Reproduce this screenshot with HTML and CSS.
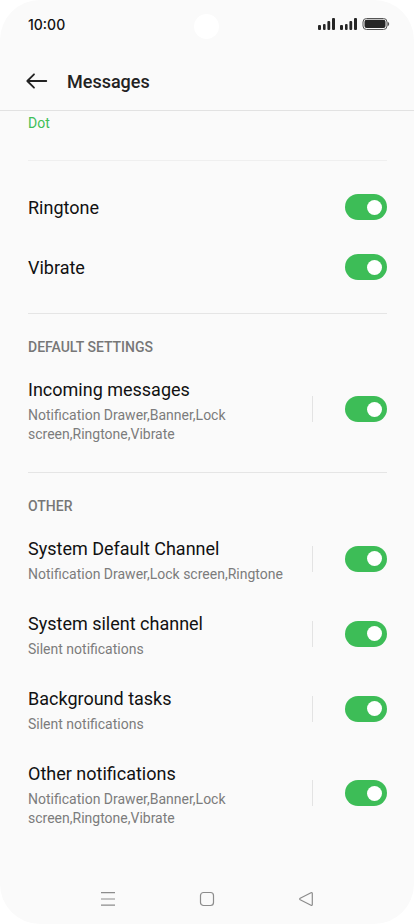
FILE: index.html
```html
<!DOCTYPE html>
<html lang="en">
<head>
<meta charset="utf-8">
<meta name="viewport" content="width=device-width, initial-scale=1">
<title>Messages</title>
<link rel="stylesheet" href="styles.css">
</head>
<body>
<div class="phone">
  <div class="camera"></div>
  <div class="status">
    <time class="clock">10:00</time>
    <svg class="indicators" width="72" height="14" viewBox="0 0 72 14" aria-hidden="true">
      <g fill="#262626">
        <rect x="0" y="8" width="3" height="5" rx="1"/><rect x="5" y="7" width="2.6" height="6" rx="1"/><rect x="9.4" y="4" width="2.8" height="9" rx="1"/><rect x="14" y="1" width="3" height="12" rx="1"/>
        <rect x="22" y="8" width="3" height="5" rx="1"/><rect x="27" y="7" width="2.6" height="6" rx="1"/><rect x="31.4" y="4" width="2.8" height="9" rx="1"/><rect x="36" y="1" width="3" height="12" rx="1"/>
        <rect x="46.5" y="2.800" width="21" height="8.200" rx="2"/>
        <path d="M69.6 5h.4q1.2.6 1.200 2t-1.200 2h-.4z" fill="#555"/>
      </g>
      <rect x="45" y="1.500" width="24" height="11" rx="3.500" fill="none" stroke="#555"/>
    </svg>
  </div>
  <header class="header">
    <button class="back" type="button" aria-label="Back">
      <svg width="22" height="16" viewBox="0 0 22 16" fill="none" stroke="#222" stroke-width="1.8" stroke-linecap="round" stroke-linejoin="round"><path d="M20.300 8H1.500M8 1.300L1.300 8L8 14.700"/></svg>
    </button>
    <h1 class="title">Messages</h1>
  </header>
  <main class="content">
    <p class="choice">Dot</p>
    <section class="group basic">
      <label class="row simple"><span class="name">Ringtone</span><input class="switch" type="checkbox" checked></label>
      <label class="row simple"><span class="name">Vibrate</span><input class="switch" type="checkbox" checked></label>
    </section>
    <section class="group">
      <h2 class="heading">DEFAULT SETTINGS</h2>
      <label class="row"><span class="text"><span class="name">Incoming messages</span><span class="detail">Notification Drawer,Banner,Lock screen,Ringtone,Vibrate</span></span><span class="bar"></span><input class="switch" type="checkbox" checked></label>
    </section>
    <section class="group">
      <h2 class="heading">OTHER</h2>
      <label class="row"><span class="text"><span class="name">System Default Channel</span><span class="detail">Notification Drawer,Lock screen,Ringtone</span></span><span class="bar"></span><input class="switch" type="checkbox" checked></label>
      <label class="row"><span class="text"><span class="name">System silent channel</span><span class="detail">Silent notifications</span></span><span class="bar"></span><input class="switch" type="checkbox" checked></label>
      <label class="row"><span class="text"><span class="name">Background tasks</span><span class="detail">Silent notifications</span></span><span class="bar"></span><input class="switch" type="checkbox" checked></label>
      <label class="row"><span class="text"><span class="name">Other notifications</span><span class="detail">Notification Drawer,Banner,Lock screen,Ringtone,Vibrate</span></span><span class="bar"></span><input class="switch" type="checkbox" checked></label>
    </section>
  </main>
  <nav class="nav">
    <button type="button" aria-label="Recent apps"><svg width="16" height="16" viewBox="0 0 16 16" fill="none" stroke="#8c8c8c" stroke-width="1.200"><path d="M1 1.700h14M1 8h14M1 14.200h14"/></svg></button>
    <button type="button" aria-label="Home"><svg width="16" height="16" viewBox="0 0 16 16" fill="none" stroke="#8c8c8c" stroke-width="1.200"><rect x="1.500" y="1.500" width="13" height="13" rx="3"/></svg></button>
    <button type="button" aria-label="Back"><svg width="16" height="16" viewBox="0 0 16 16" fill="none" stroke="#8c8c8c" stroke-width="1.200" stroke-linejoin="round"><path d="M2.200 7.300L13 1.700q1.300-.5 1.300.8v11q0 1.300-1.300.8L2.200 8.700q-1-.7 0-1.400z"/></svg></button>
  </nav>
</div>
</body>
</html>
```
FILE: styles.css
```css
* {
  box-sizing: border-box;
}

body {
  margin: 0;
  background: #fff;
  font-family: Roboto, "Liberation Sans", sans-serif;
}

button {
  display: flex;
  padding: 0;
  border: 0;
  background: none;
}

h1, h2, p {
  margin: 0;
}

.phone {
  position: relative;
  display: flex;
  flex-direction: column;
  min-height: 100vh;
  border-radius: 40px;
  background: #fafafa;
}

.camera {
  position: absolute;
  top: 14px;
  left: 50%;
  width: 25px;
  height: 25px;
  margin-left: -13px;
  border-radius: 50%;
  background: #fff;
}

.status {
  display: flex;
  align-items: center;
  justify-content: space-between;
  height: 48px;
  padding: 0 24px 0 28px;
}

.clock {
  color: #111;
  font-family: Inter, sans-serif;
  font-size: 14px;
  font-weight: 500;
}

.header {
  display: flex;
  align-items: center;
  gap: 19px;
  height: 63px;
  padding: 4px 26px 0;
  border-bottom: 1px solid #e2e2e2;
}

.title {
  color: #222;
  font-size: 18px;
  font-weight: 500;
}

.content {
  flex: 1;
  padding: 0 27px 0 28px;
}

.choice {
  height: 50px;
  padding-top: 2px;
  border-bottom: 1px solid #efefef;
  color: #3fbf58;
  font-size: 14px;
  line-height: 20px;
}

.group + .group {
  padding: 23px 0 15px;
  border-top: 1px solid #e5e5e5;
}

.basic {
  padding: 16px 0;
}

.heading {
  margin-bottom: 6px;
  color: #777;
  font-size: 14px;
  font-weight: 500;
  line-height: 20px;
}

.row {
  display: flex;
  align-items: center;
  padding: 11px 0 13px;
}

.row.simple {
  height: 60px;
  padding: 0;
}

.text {
  flex: 1;
  padding: 4px 20px 0 0;
}

.name {
  display: block;
  color: #111;
  font-size: 18px;
  line-height: 24px;
}

.simple .name {
  padding-top: 2px;
}

.detail {
  display: block;
  margin-top: 4px;
  color: #7c7c7c;
  font-size: 14px;
  line-height: 19px;
}

.bar {
  width: 1px;
  height: 26px;
  margin-right: 32px;
  background: #e3e3e3;
}

.switch {
  appearance: none;
  display: flex;
  flex: none;
  align-items: center;
  justify-content: flex-end;
  width: 42px;
  height: 26px;
  margin: 0 0 0 auto;
  padding: 0 5px;
  border-radius: 13px;
  background: #3dbd57;
}

.switch:not(:checked) {
  justify-content: flex-start;
  background: #ccc;
}

.switch::before {
  content: "";
  width: 15px;
  height: 15px;
  border-radius: 50%;
  background: #fff;
}

.nav {
  display: flex;
  justify-content: space-between;
  padding: 17px 100px;
}
```
